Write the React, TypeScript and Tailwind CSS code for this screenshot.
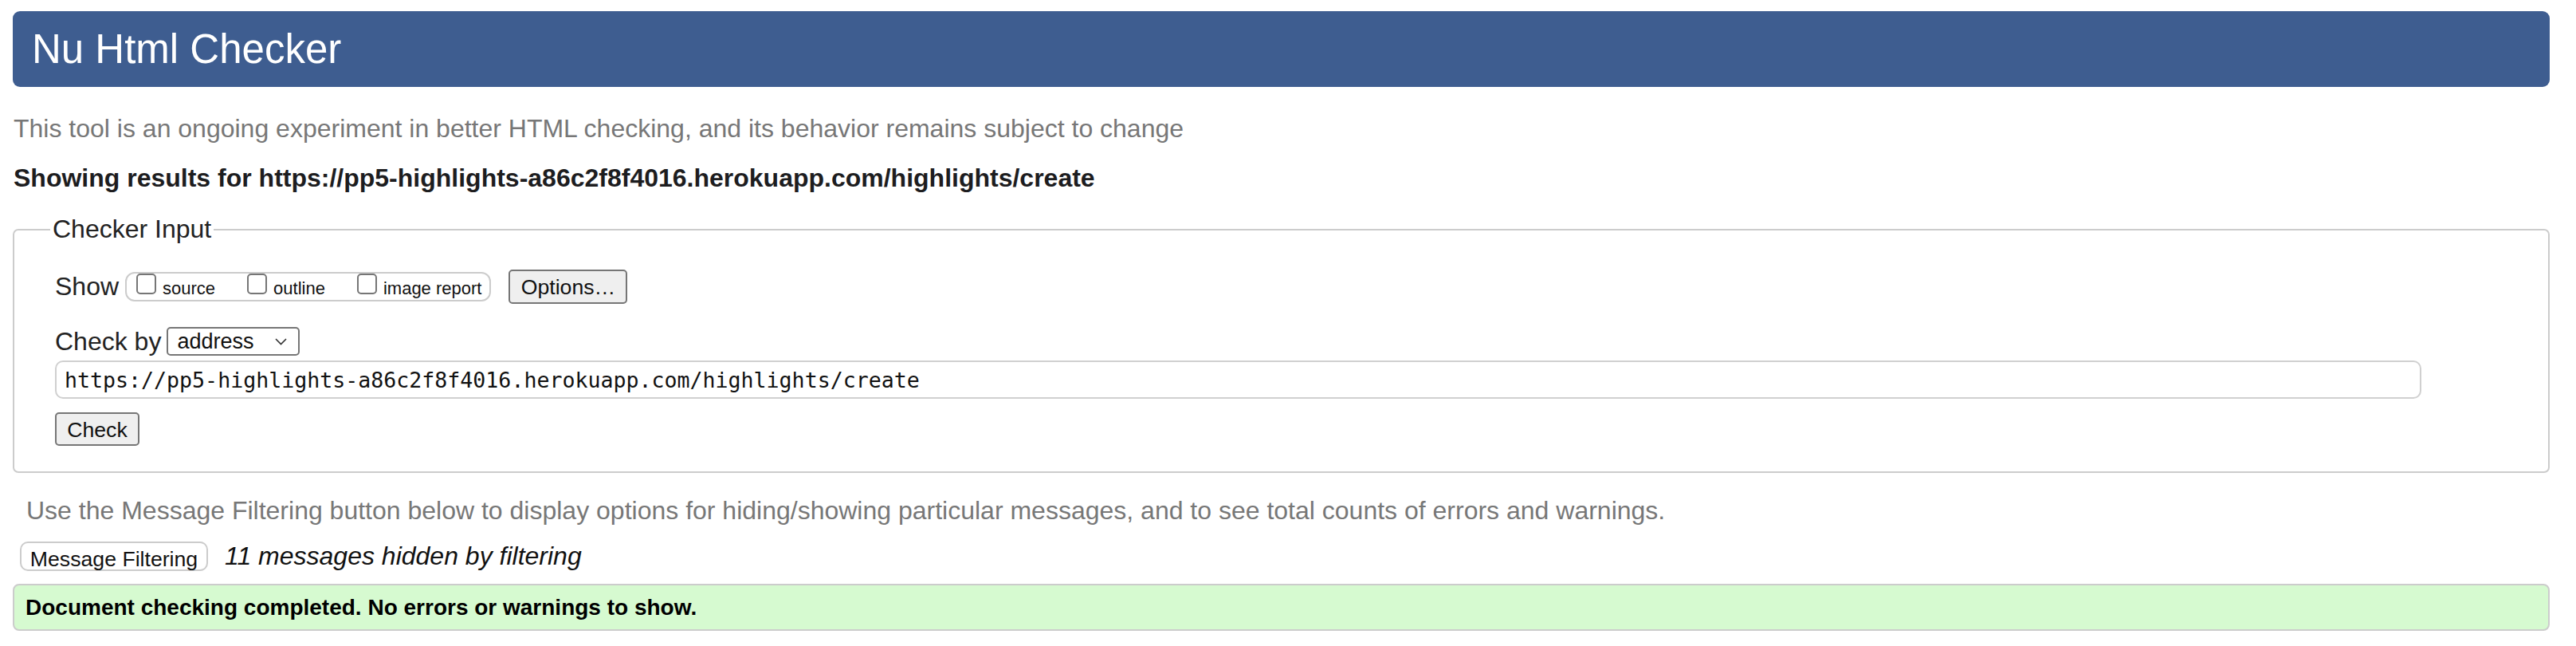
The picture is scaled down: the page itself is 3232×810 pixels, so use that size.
import { useState } from "react"

const URL_VALUE = "https://pp5-highlights-a86c2f8f4016.herokuapp.com/highlights/create"

const SHOW_OPTIONS = ["source", "outline", "image report"]

function Checkbox({ label }: { label: string }) {
  const [on, setOn] = useState(false)
  return (
    <label className="flex items-baseline gap-[8px] cursor-pointer">
      <input
        type="checkbox"
        checked={on}
        onChange={() => setOn(!on)}
        className="appearance-none w-[25px] h-[26px] border-2 border-[#767676] rounded-[5px] bg-white checked:bg-[#0a66d8]"
      />
      <span className="text-[22px] leading-[26px] text-[#111]">{label}</span>
    </label>
  )
}

export default function App() {
  return (
    <div className="min-h-[810px] bg-white pl-[16px] pr-[33px] pt-[14px] font-['Liberation_Sans',Arial,sans-serif] text-[#222]">
      {/* title bar */}
      <h1 className="h-[95px] rounded-[9px] bg-[#3e5d90] pl-[24px] text-[51px] leading-[95px] font-normal text-white">
        Nu Html Checker
      </h1>

      <p className="mt-[34px] pl-[1px] text-[32px] leading-[37px] text-[#777]">
        This tool is an ongoing experiment in better HTML checking, and its behavior remains subject to change
      </p>
      <p className="mt-[25px] pl-[1px] text-[32px] leading-[37px] font-bold text-[#1d1d1f]">
        Showing results for {URL_VALUE}
      </p>

      {/* checker input */}
      <fieldset className="mt-[27px] border-2 border-[#cccccc] rounded-[7px] pl-[51px] pb-[32px] pt-[32px]">
        <legend className="ml-[-6px] px-[3px] text-[32px] leading-[37px] text-[#222]">Checker Input</legend>

        <div className="flex items-center h-[43px]">
          <span className="text-[32px] leading-[37px]">Show</span>
          <div className="ml-[8px] flex items-start gap-[40px] h-[37px] border-2 border-[#cccccc] rounded-[12px] pl-[12px] pr-[10px]">
            {SHOW_OPTIONS.map(o => <Checkbox key={o} label={o} />)}
          </div>
          <button className="ml-[22px] h-[43px] w-[149px] rounded-[5px] border-2 border-[#767676] bg-[#efefef] text-[26.67px] text-[#111]">
            Options…
          </button>
        </div>

        <div className="mt-[29px] flex items-center h-[36px]">
          <span className="text-[32px] leading-[37px]">Check by</span>
          <div className="relative ml-[7px] h-[36px] w-[167px] rounded-[5px] border-2 border-[#767676] bg-white">
            <span className="absolute left-[11px] top-0 text-[27px] leading-[32px] text-[#111]">address</span>
            <svg className="absolute right-[14px] top-[12px]" width="15" height="9" viewBox="0 0 15 9" fill="none">
              <polyline points="1,1 7.5,7.5 14,1" stroke="#333" strokeWidth="1.6" />
            </svg>
          </div>
        </div>

        <input
          readOnly
          value={URL_VALUE}
          className="mt-[6px] block h-[48px] w-[2969px] rounded-[10px] border-2 border-[#d0d0d0] px-[10px] font-['DejaVu_Sans_Mono',monospace] text-[26.6px] text-[#111] outline-none"
        />

        <button className="mt-[17px] block h-[42px] w-[106px] rounded-[5px] border-2 border-[#767676] bg-[#efefef] text-[26.67px] text-[#111]">
          Check
        </button>
      </fieldset>

      <p className="mt-[29px] pl-[17px] text-[32px] leading-[37px] text-[#777]">
        Use the Message Filtering button below to display options for hiding/showing particular messages, and to see total counts of errors and warnings.
      </p>

      <div className="mt-[20px] flex items-center gap-[21px] pl-[9px]">
        <button className="h-[37px] w-[236px] rounded-[10px] border-2 border-[#cccccc] bg-white text-[26.67px] text-[#111]">
          Message Filtering
        </button>
        <span className="text-[32px] leading-[37px] italic text-[#111]">11 messages hidden by filtering</span>
      </div>

      <div className="mt-[16px] flex items-center h-[59px] rounded-[8px] border-2 border-[#cccccc] bg-[#d6fad0] pl-[14px]">
        <span className="text-[28px] leading-[32px] font-bold text-black">
          Document checking completed. No errors or warnings to show.
        </span>
      </div>
    </div>
  )
}
